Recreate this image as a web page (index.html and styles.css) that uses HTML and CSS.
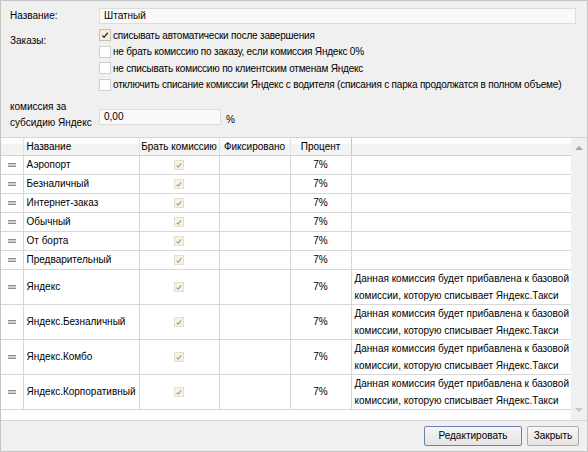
FILE: index.html
```html
<!DOCTYPE html>
<html lang="ru">
<head>
    <meta charset="UTF-8">
    <title>Тариф</title>
    <link rel="stylesheet" href="styles.css">
</head>
<body>
<div class="window">
    <div class="form">
        <div class="form-row">
            <div class="form-label">Название:</div>
            <div class="form-field"><div class="input input-name">Штатный</div></div>
        </div>
        <div class="form-row">
            <div class="form-label">Заказы:</div>
            <div class="form-field checks">
                <div class="check-line"><span class="cb cb-checked"><svg viewBox="0 0 11 11" width="11" height="11"><path d="M2.5 5.5 L4.5 7.5 L8.5 2.5" fill="none" stroke="#333" stroke-width="1.5"/></svg></span>списывать автоматически после завершения</div>
                <div class="check-line"><span class="cb"></span>не брать комиссию по заказу, если комиссия Яндекс 0%</div>
                <div class="check-line"><span class="cb"></span>не списывать комиссию по клиентским отменам Яндекс</div>
                <div class="check-line"><span class="cb"></span>отключить списание комиссии Яндекс с водителя (списания с парка продолжатся в полном объеме)</div>
            </div>
        </div>
        <div class="form-row">
            <div class="form-label label-two">комиссия за<br>субсидию Яндекс</div>
            <div class="form-field"><div class="input input-sum">0,00</div><span class="unit">%</span></div>
        </div>
    </div>

    <div class="grid">
        <div class="grid-main">
            <table class="grid-table">
                <colgroup>
                    <col class="c-handle"><col class="c-name"><col class="c-take"><col class="c-fix"><col class="c-pct"><col>
                </colgroup>
                <thead>
                    <tr>
                        <th></th>
                        <th class="left">Название</th>
                        <th>Брать комиссию</th>
                        <th>Фиксировано</th>
                        <th class="th-last">Процент</th>
                        <th></th>
                    </tr>
                </thead>
                <tbody id="rows"></tbody>
            </table>
        </div>
        <div class="scrollbar">
            <span class="arrow arrow-up"></span>
            <span class="arrow arrow-down"></span>
        </div>
    </div>

    <div class="footer">
        <button class="btn btn-default">Редактировать</button>
        <button class="btn btn-close">Закрыть</button>
    </div>
</div>
<script>
    var note = 'Данная комиссия будет прибавлена к базовой комиссии, которую списывает Яндекс.Такси';
    var rows = [
        {name: 'Аэропорт'},
        {name: 'Безналичный'},
        {name: 'Интернет-заказ'},
        {name: 'Обычный'},
        {name: 'От борта'},
        {name: 'Предварительный'},
        {name: 'Яндекс', note: note},
        {name: 'Яндекс.Безналичный', note: note},
        {name: 'Яндекс.Комбо', note: note},
        {name: 'Яндекс.Корпоративный', note: note}
    ];
    var tick = '<span class="cb-dis"><svg viewBox="0 0 9 9" width="9" height="9"><path d="M1.8 4.6 L3.6 6.4 L7 2.2" fill="none" stroke="#9a9a9a" stroke-width="1.2"/></svg></span>';
    var html = [];
    for (var i = 0; i < rows.length; i++) {
        var r = rows[i];
        html.push('<tr class="' + (r.note ? 'tall' : '') + '">' +
            '<td class="handle"><span class="grip"></span></td>' +
            '<td class="left">' + r.name + '</td>' +
            '<td>' + tick + '</td>' +
            '<td></td>' +
            '<td>7%</td>' +
            '<td class="note">' + (r.note || '') + '</td>' +
            '</tr>');
    }
    document.getElementById('rows').innerHTML = html.join('');
</script>
</body>
</html>
```

FILE: styles.css
```css
* {
    box-sizing: border-box;
}
body {
    margin: 0;
    font-family: "Liberation Sans", Arial, sans-serif;
    font-size: 10px;
    color: #000;
}
.window {
    width: 588px;
    height: 452px;
    border: 1px solid #c4c4c4;
    background: #f0f0f0;
    display: flex;
    flex-direction: column;
}

/* form */
.form {
    padding: 6px 11px 0 9px;
    height: 136px;
}
.form-row {
    display: flex;
}
.form-label {
    width: 89px;
    flex-shrink: 0;
    line-height: 17px;
}
.form-field {
    flex: 1;
    display: flex;
    align-items: center;
}
.form-row + .form-row {
    margin-top: 8px;
}
.input {
    height: 16px;
    line-height: 14px;
    padding: 0 4px;
    border: 1px solid #dcdcdc;
    background: #f9f9f9;
}
.input-name {
    width: 100%;
}
.input-sum {
    width: 122px;
    margin-top: 1px;
}
.unit {
    margin-left: 5px;
    margin-top: 6px;
}
.checks {
    flex-direction: column;
    align-items: stretch;
    margin-top: -5px;
}
.check-line {
    display: flex;
    align-items: center;
    height: 16.5px;
    white-space: nowrap;
    letter-spacing: -0.2px;
}
.cb {
    width: 12px;
    height: 12px;
    margin-right: 2px;
    flex-shrink: 0;
    border: 1px solid #cfcfcf;
    background: #fff;
    display: inline-flex;
    align-items: center;
    justify-content: center;
}
.cb-checked {
    background: #f6eedb;
    border-color: #c8c0a8;
}
.label-two {
    line-height: 16px;
    margin-top: -2px;
}

/* grid */
.grid {
    height: 284px;
    display: flex;
    border-top: 1px solid #d4d4d4;
    border-bottom: 1px solid #d4d4d4;
    background: #fff;
}
.grid-main {
    flex: 1;
}
.grid-table {
    width: 100%;
    table-layout: fixed;
    border-collapse: collapse;
}
.c-handle { width: 22px; }
.c-name { width: 116px; }
.c-take { width: 80px; }
.c-fix { width: 71px; }
.c-pct { width: 61px; }

.grid-table th {
    height: 17px;
    padding: 0;
    font-weight: normal;
    text-align: center;
    white-space: nowrap;
    overflow: hidden;
    background: linear-gradient(#fdfdfd 0, #fdfdfd 35%, #f3f3f3 36%, #f3f3f3 100%);
    border-right: 1px solid #e2e2e2;
    border-bottom: 1px solid #d4d4d4;
}
.grid-table th.th-last {
    border-right-color: #c8c8c8;
}
.grid-table th:last-child {
    border-right: 0;
}
.grid-table td {
    height: 19px;
    padding: 0;
    text-align: center;
    vertical-align: middle;
    border: 1px solid #d8d8d8;
    border-top: 0;
    white-space: nowrap;
}
.grid-table td:first-child {
    border-left: 0;
}
.grid-table td:last-child {
    border-right: 0;
}
.grid-table .left {
    text-align: left;
    padding-left: 3px;
}
.grid-table tr.tall td {
    height: 35px;
}
.grid-table td.note {
    text-align: left;
    white-space: normal;
    line-height: 17px;
    padding-left: 3px;
}
.grip {
    display: inline-block;
    width: 8px;
    height: 4px;
    border-top: 1px solid #8c8c8c;
    border-bottom: 1px solid #8c8c8c;
    background: #d0d0d0;
    vertical-align: middle;
}
.cb-dis {
    display: inline-flex;
    align-items: center;
    justify-content: center;
    width: 10px;
    height: 10px;
    border: 1px solid #e6dfc6;
    background: #f7f2e3;
    vertical-align: middle;
}

.scrollbar {
    width: 16px;
    background: #f0f0f0;
    position: relative;
}
.arrow {
    position: absolute;
    left: 4px;
    width: 0;
    height: 0;
    border-left: 4px solid transparent;
    border-right: 4px solid transparent;
}
.arrow-up {
    top: 8px;
    border-bottom: 4px solid #a6a6a6;
}
.arrow-down {
    bottom: 8px;
    border-top: 4px solid #c6c6c6;
}

/* footer */
.footer {
    flex: 1;
    display: flex;
    justify-content: flex-end;
    align-items: center;
    padding-right: 8px;
    padding-bottom: 1px;
}
.btn {
    height: 20px;
    padding: 0;
    margin-left: 5px;
    font-family: inherit;
    font-size: 10px;
    color: #000;
    border: 1px solid #acacac;
    border-radius: 2px;
    background: linear-gradient(#f6f6f6, #e4e4e4);
}
.btn-default {
    width: 98px;
    border-color: #6d7fb4;
}
.btn-close {
    width: 52px;
}
```
